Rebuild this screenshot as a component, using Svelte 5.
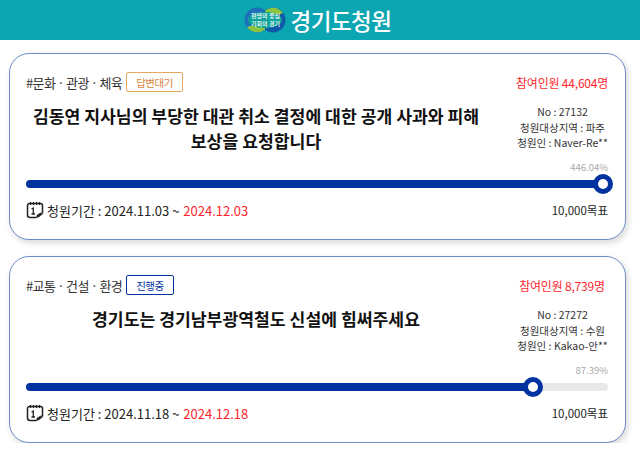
<script>
	const petitions = [
		{
			category: '#문화\u2009·\u2009관광\u2009·\u2009체육',
			status: '답변대기',
			statusClass: 'waiting',
			count: '44,604',
			title: '김동연 지사님의 부당한 대관 취소 결정에 대한 공개 사과와 피해 보상을 요청합니다',
			no: '27132',
			region: '파주',
			author: 'Naver-Re**',
			percent: '446.04%',
			// over 100% the knob stops just short of the track end
			width: 99.4,
			start: '2024.11.03',
			end: '2024.12.03'
		},
		{
			category: '#교통\u2009·\u2009건설\u2009·\u2009환경',
			status: '진행중',
			statusClass: 'active',
			count: '8,739',
			title: '경기도는 경기남부광역철도 신설에 힘써주세요',
			no: '27272',
			region: '수원',
			author: 'Kakao-안**',
			percent: '87.39%',
			width: 87.39,
			start: '2024.11.18',
			end: '2024.12.18'
		}
	];
</script>

<header class="site-header">
	<div class="logo">
		<svg width="42" height="26" viewBox="0 0 42 26" aria-hidden="true">
			<circle cx="13" cy="13" r="12.5" fill="#1c6fb8" />
			<circle cx="29" cy="13" r="12.5" fill="#0f5aa8" />
			<path d="M21 3.500A12.500 12.500 0 0 1 39 6 C34 8 27 8 21 6z" fill="#8cc63f" />
			<path d="M21 22.500A12.500 12.500 0 0 1 3 20 C8 18 15 18 21 20z" fill="#8cc63f" />
			<ellipse cx="21" cy="13" rx="17" ry="8" fill="#0ea39a" />
		</svg>
		<span class="logo-small">현명의 중심<br />기회의 경기</span>
	</div>
	<span class="brand">경기도청원</span>
</header>

<main class="list">
	{#each petitions as p}
		<article class="card">
			<div class="top-row">
				<div class="tags">
					<span class="category">{p.category}</span>
					<span class="status {p.statusClass}">{p.status}</span>
				</div>
				<span class="count">참여인원 {p.count}명</span>
			</div>

			<div class="middle">
				<h2>{p.title}</h2>
				<div class="meta">
					<div>No : {p.no}</div>
					<div>청원대상지역 : {p.region}</div>
					<div>청원인 : {p.author}</div>
				</div>
			</div>

			<div class="percent">{p.percent}</div>
			<div class="track">
				<div class="fill" style="width: {p.width}%">
					<span class="knob"></span>
				</div>
			</div>

			<div class="bottom-row">
				<div class="period">
					<svg width="18" height="18" viewBox="0 0 18 18" fill="none" stroke="#222" aria-hidden="true">
						<path d="M10.500 16.500H4a2.500 2.500 0 0 1-2.500-2.500V4.500A2 2 0 0 1 3.500 2.500h11a2 2 0 0 1 2 2v8" stroke-width="1.500" />
						<path d="M4.500 1v3M7.500 1v3M10.500 1v3M13.500 1v3" stroke-width="1.300" />
						<path d="M5.500 8l1.800-1v6M5.500 13h3.500" stroke-width="1.300" />
						<path d="M10.500 16.500l.6-2.500 4-2.200 1.400 1.200-3.500 2.800z" fill="#222" stroke-width="0.600" />
					</svg>
					<span>청원기간 : {p.start} ~ <span class="end">{p.end}</span></span>
				</div>
				<span class="goal">10,000목표</span>
			</div>
		</article>
	{/each}
</main>

<style>
	:global(body) {
		background: #fff;
		font-family: 'Noto Sans CJK KR', 'Noto Sans', sans-serif;
		color: #222;
	}

	.site-header {
		height: 40px;
		background: #0ca5b2;
		display: flex;
		align-items: center;
		justify-content: center;
		gap: 4px;
		padding-right: 4px;
		box-sizing: border-box;
	}

	.logo {
		position: relative;
		width: 42px;
		height: 26px;
	}

	.logo svg {
		display: block;
	}

	.logo-small {
		position: absolute;
		inset: 0;
		display: flex;
		align-items: center;
		justify-content: center;
		text-align: center;
		font-size: 6px;
		line-height: 8px;
		font-weight: 500;
		color: #fff;
		white-space: nowrap;
	}

	.brand {
		font-size: 22.500px;
		line-height: 30px;
		font-weight: 500;
		color: #fff;
		letter-spacing: -0.5px;
	}

	.list {
		padding: 13px 14px 0 9px;
		display: flex;
		flex-direction: column;
		gap: 16px;
	}

	.card {
		height: 187px;
		box-sizing: border-box;
		padding: 16px 17px 0 16px;
		border: 1px solid #6d8cc9;
		border-radius: 20px;
		background: #fff;
		box-shadow: 2px 3px 6px rgba(0, 0, 0, 0.15);
	}

	.top-row {
		display: flex;
		justify-content: space-between;
		align-items: center;
		height: 24px;
	}

	.tags {
		display: flex;
		align-items: center;
		gap: 4px;
	}

	.category {
		font-size: 13px;
		letter-spacing: -0.6px;
		color: #333;
	}

	.status {
		display: inline-flex;
		align-items: center;
		justify-content: center;
		height: 20px;
		box-sizing: border-box;
		padding: 0 9px;
		font-size: 10.500px;
		letter-spacing: -0.5px;
		border-radius: 2px;
	}

	.waiting {
		border: 1px solid #e8a864;
		color: #d9843a;
	}

	.active {
		border: 1px solid #0033a0;
		color: #0033a0;
	}

	.count {
		width: 92px;
		text-align: center;
		white-space: nowrap;
		font-size: 12px;
		color: #ff1f2d;
		letter-spacing: -0.2px;
	}

	.middle {
		display: flex;
		gap: 31px;
		height: 51px;
		margin-top: 9px;
	}

	h2 {
		flex: 1;
		margin: 0;
		font-size: 17.200px;
		line-height: 25px;
		font-weight: 700;
		text-align: center;
		color: #111;
		word-break: keep-all;
	}

	.meta {
		width: 91px;
		flex: none;
		margin-top: 1px;
		text-align: center;
		font-size: 10.500px;
		line-height: 15.500px;
		color: #333;
		white-space: nowrap;
	}

	.percent {
		margin-top: 6px;
		height: 14px;
		text-align: right;
		font-size: 9.500px;
		line-height: 14px;
		color: #aaa;
	}

	.track {
		height: 8px;
		margin-top: 6px;
		border-radius: 4px;
		background: #e8e8e8;
	}

	.fill {
		position: relative;
		height: 100%;
		border-radius: 4px;
		background: #0033a0;
	}

	.knob {
		position: absolute;
		right: -8px;
		top: -6px;
		width: 20px;
		height: 20px;
		box-sizing: border-box;
		border: 5px solid #0033a0;
		border-radius: 50%;
		background: #fff;
	}

	.bottom-row {
		display: flex;
		justify-content: space-between;
		align-items: center;
		margin-top: 12px;
		height: 20px;
	}

	.period {
		display: flex;
		align-items: center;
		font-size: 13px;
		color: #222;
		white-space: pre;
	}

	.period svg {
		margin-right: 3px;
	}

	.end {
		margin-left: 1px;
		color: #ff1f2d;
	}

	.goal {
		font-size: 11.500px;
		color: #222;
	}
</style>
